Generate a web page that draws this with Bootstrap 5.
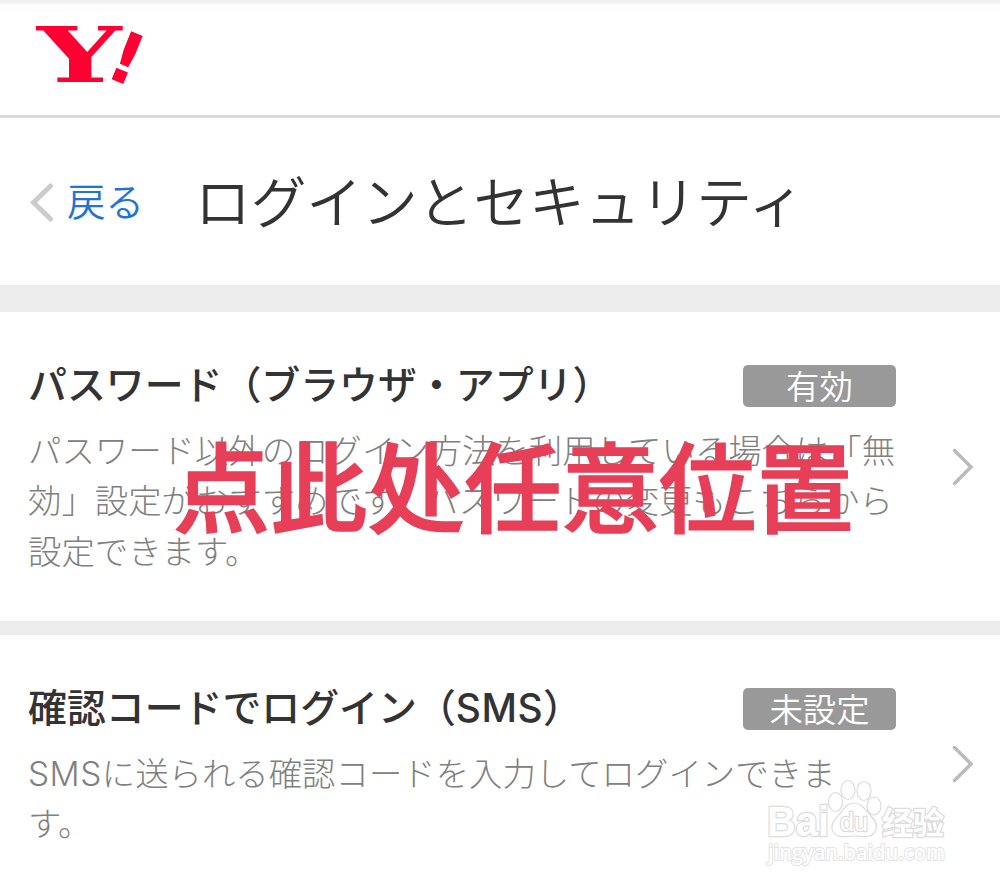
<!DOCTYPE html>
<html lang="ja">
<head>
    <meta charset="UTF-8">
    <meta name="viewport" content="width=device-width, initial-scale=1.0">
    <title>ログインとセキュリティ</title>

    <link href="https://cdn.jsdelivr.net/npm/bootstrap@5.3.0/dist/css/bootstrap.min.css" rel="stylesheet">

    <style>
        body {
            height: 887px;
            overflow: hidden;
            color: #333;
            background-color: #fff;
            font-family: "Noto Sans CJK JP", sans-serif;
        }
        .site-header {
            height: 118px;
            padding-left: 30px;
            border-bottom: 3px solid #dadada;
            background: linear-gradient(#f0f0f0 0, #f1f1f1 3px, #fafafa 4px, #fff 14px);
        }
        .logo { overflow: visible; }
        .title-bar { height: 167px; padding: 0 28px 0 30px; }
        .back-link {
            gap: 13px;
            width: 165px;
            font-size: 38.5px;
            font-weight: 350;
            line-height: 1;
            color: #2273d8;
        }
        .back-link span { padding-bottom: 4px; }
        .page-title {
            padding-bottom: 5px;
            font-size: 55.7px;
            font-weight: 350;
            line-height: 1;
        }
        .gap-bar { height: 27px; background-color: #ededed; }
        .gap-bar-thin { height: 14px; background-color: #ededed; }
        .setting {
            height: 309px;
            padding: 0 26px 0 28px;
        }
        .setting-sms { height: 258px; }
        .setting-body { width: 868px; padding-top: 7px; }
        .setting-head { margin-bottom: 17px; }
        .setting-title {
            font-size: 38.9px;
            font-weight: 500;
            line-height: 35px;
        }
        .setting-text {
            font-size: 33.4px;
            font-weight: 300;
            line-height: 50.4px;
            color: #808080;
        }
        .latin {
            font-family: "Inter", "Liberation Sans", sans-serif;
            letter-spacing: .5px;
            line-height: 1;
        }
        .state {
            width: 153px;
            height: 42px;
            font-size: 33.4px;
            font-weight: 350;
            line-height: 39px;
            color: #fff;
            background-color: #999;
            border-radius: 5px;
        }
        .callout {
            left: 173px;
            top: 434px;
            font-family: "Noto Sans CJK SC", sans-serif;
            font-size: 97.2px;
            font-weight: 500;
            line-height: 97px;
            color: #e63f57;
            -webkit-text-stroke: 1.5px #e63f57;
        }
        .stamp { left: 755px; top: 770px; overflow: visible; }
    </style>
</head>
<body>

    <header class="site-header d-flex">
        <svg class="logo" width="120" height="112" viewBox="30 0 120 112" fill="#ff0033">
            <text transform="translate(37 81.500) scale(1.56 1)" font-family="DejaVu Serif" font-weight="700" font-size="76">Y</text>
            <text transform="translate(102.500 75.500) rotate(22)" font-family="DejaVu Sans" font-weight="700" font-size="71">!</text>
        </svg>
    </header>

    <div class="title-bar d-flex align-items-center">
        <a href="#" class="back-link d-flex align-items-center text-decoration-none">
            <svg width="24" height="40" viewBox="0 0 24 40" fill="none" stroke="#ccc" stroke-width="5" stroke-linecap="round"><path d="M20.500 4 3.500 20.500 20.500 37"/></svg>
            <span>戻る</span>
        </a>
        <h1 class="page-title mb-0 text-nowrap">ログインとセキュリティ</h1>
    </div>

    <div class="gap-bar"></div>

    <main>
        <section class="setting d-flex align-items-center justify-content-between">
            <div class="setting-body">
                <div class="setting-head d-flex justify-content-between">
                    <h2 class="setting-title mb-0 text-nowrap">パスワード（ブラウザ・アプリ）</h2>
                    <span class="state text-center">有効</span>
                </div>
                <div class="setting-text text-nowrap">パスワード以外のログイン方法を利用している場合は「無<br>効」設定がおすすめです。パスワードの変更もこちらから<br>設定できます。</div>
            </div>
            <svg width="22" height="40" viewBox="0 0 22 40" fill="none" stroke="#bbb" stroke-width="3.500" stroke-linecap="round"><path d="M2.500 3.500 19 20 2.500 36.500"/></svg>
        </section>

        <div class="gap-bar-thin"></div>

        <section class="setting setting-sms d-flex align-items-center justify-content-between">
            <div class="setting-body">
                <div class="setting-head d-flex justify-content-between">
                    <h2 class="setting-title mb-0 text-nowrap">確認コードでログイン（<span class="latin">SMS</span>）</h2>
                    <span class="state text-center">未設定</span>
                </div>
                <div class="setting-text text-nowrap"><span class="latin">SMS</span>に送られる確認コードを入力してログインできま<br>す。</div>
            </div>
            <svg width="22" height="40" viewBox="0 0 22 40" fill="none" stroke="#bbb" stroke-width="3.500" stroke-linecap="round"><path d="M2.500 3.500 19 20 2.500 36.500"/></svg>
        </section>
    </main>

    <div class="callout position-absolute text-nowrap">点此处任意位置</div>

    <svg class="stamp position-absolute" width="200" height="100" viewBox="755 770 200 100" fill="#fff" stroke="#dcdcdc" stroke-width="1.200">
        <g font-family="Liberation Sans" font-weight="700" stroke-width="2.500" paint-order="stroke">
            <text x="767" y="836" font-size="42" textLength="62" lengthAdjust="spacingAndGlyphs">Bai</text>
            <text x="882" y="834" font-family="Noto Sans CJK SC" font-weight="700" font-size="31">经验</text>
        </g>
        <!-- paw -->
        <ellipse cx="835.500" cy="802" rx="7" ry="9.500"/>
        <ellipse cx="848" cy="790" rx="7" ry="9.500"/>
        <ellipse cx="864" cy="791" rx="7" ry="9.500"/>
        <ellipse cx="874" cy="806" rx="7" ry="9"/>
        <path d="M854 803c-8 0-11 7-16 13-6 6-8 12-4 17 5 6 12 3 20 3s15 3 20-3c4-5 3-11-3-17-6-6-9-13-17-13z"/>
        <text x="840" y="831" font-family="Liberation Sans" font-size="26" font-weight="400" stroke-width="2.500" paint-order="stroke" textLength="28" lengthAdjust="spacingAndGlyphs">du</text>
        <text x="768" y="860" font-family="Open Sans" font-size="22" font-weight="600" stroke-width="2" stroke="#e2e2e2" paint-order="stroke" textLength="177" lengthAdjust="spacingAndGlyphs">jingyan.baidu.com</text>
    </svg>

    <script src="https://cdn.jsdelivr.net/npm/bootstrap@5.3.0/dist/js/bootstrap.bundle.min.js"></script>
</body>
</html>
